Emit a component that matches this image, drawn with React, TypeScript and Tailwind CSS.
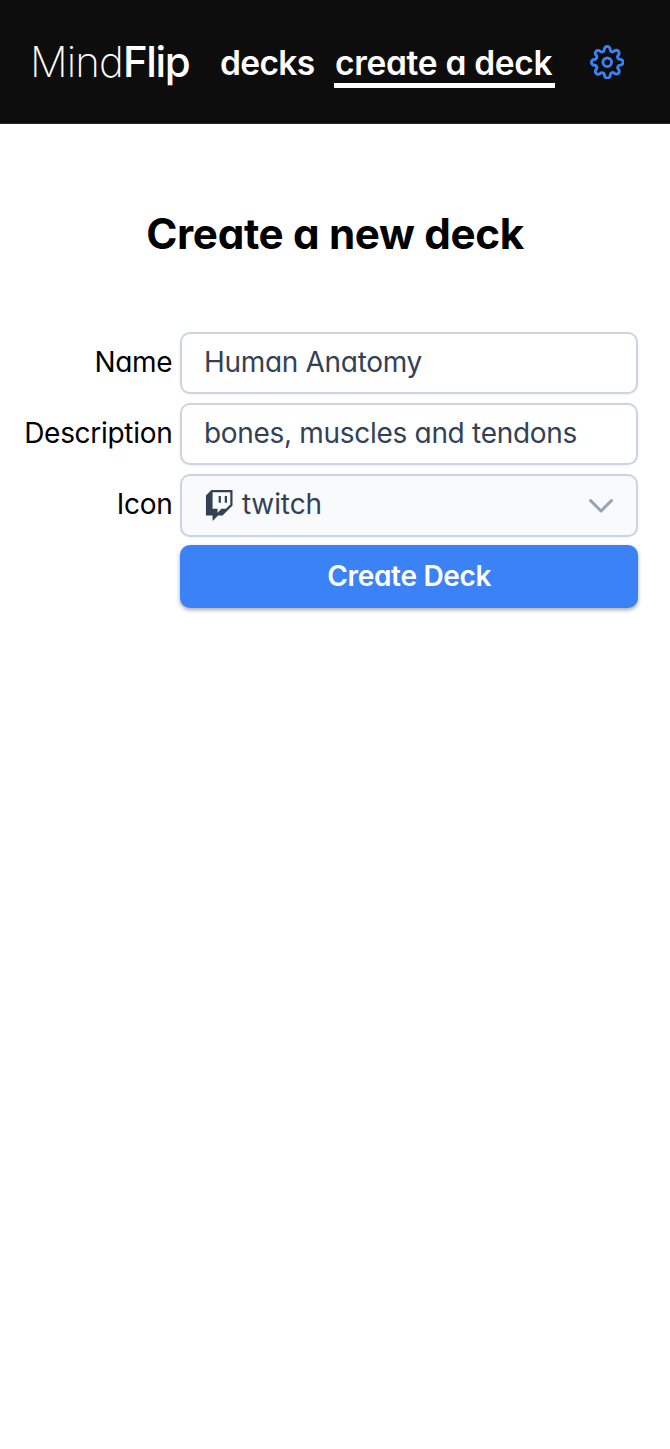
import { useState } from "react";
import { FiSettings } from "react-icons/fi";
import { BsTwitch } from "react-icons/bs";

const fieldClass =
  "w-full rounded-[10px] border-2 border-[#cbd5e1] px-[21.5px] text-[#334155] shadow-[0_1px_3px_rgba(0,0,0,0.06)] outline-none";

export default function App() {
  const [name, setName] = useState("Human Anatomy");
  const [description, setDescription] = useState("bones, muscles and tendons");

  return (
    <div className="min-h-[1449px] bg-white font-['Inter',sans-serif] text-[28px] leading-[43px] tracking-[-0.3px] text-black antialiased [font-feature-settings:'cv11']">
      <header className="flex h-[124px] items-center border-b border-[#2a2628] bg-[#0d0d0d] pl-[30px] text-white">
        <h1 className="w-[190px] whitespace-nowrap pt-[1px] text-[42px] font-extralight leading-[64px] tracking-[-0.9px]">
          Mind<span className="font-medium tracking-[-1.4px]">Flip</span>
        </h1>
        <nav className="flex items-center text-[33.5px] font-semibold leading-[42px]">
          <a className="w-[113.5px] whitespace-nowrap pt-[2px] tracking-[-0.65px]">decks</a>
          <a className="mt-[6px] flex h-[48px] w-[221px] flex-col whitespace-nowrap">
            <span className="h-[42px] px-[1.5px] pt-[1px] tracking-[-0.3px]">create a deck</span>
            <span className="h-[5px] bg-white" />
          </a>
        </nav>
        <FiSettings className="ml-[35px] mt-[1px] size-[34.5px] text-[#3b82f6]" />
      </header>

      <main className="pt-[80px]">
        <h2 className="text-center text-[42.2px] font-bold leading-[60px] tracking-[-0.35px]">
          Create a new deck
        </h2>
        <form
          className="mt-[68px] grid grid-cols-[172.4px_457.6px] items-center gap-x-2 gap-y-[9px]"
          onSubmit={(e) => e.preventDefault()}
        >
          <label className="pb-[1px] text-right" htmlFor="name">Name</label>
          <input
            id="name"
            className={`${fieldClass} h-[62px] pb-[2px]`}
            value={name}
            onChange={(e) => setName(e.target.value)}
          />
          <label className="pb-[1px] text-right" htmlFor="description">Description</label>
          <input
            id="description"
            className={`${fieldClass} h-[62px] pb-[2px]`}
            value={description}
            onChange={(e) => setDescription(e.target.value)}
          />
          <label className="pb-[1px] text-right">Icon</label>
          <button type="button" className={`${fieldClass} flex h-[62.6px] items-center bg-[#f8fafc]`}>
            <BsTwitch className="size-[31px]" />
            <span className="ml-[7px] pb-[1px] tracking-[-0.1px]">twitch</span>
            <svg className="ml-auto h-[15px] w-[26px] text-[#94a3b8]" viewBox="0 0 26 15" fill="none" stroke="currentColor" strokeWidth="3" strokeLinecap="round" strokeLinejoin="round">
              <path d="m2.5 2.5 10.5 10.5L23.5 2.5" />
            </svg>
          </button>
          <button
            type="submit"
            className="col-start-2 -mt-[0.4px] h-[62.8px] rounded-[10px] bg-[#3b82f6] font-semibold text-white shadow-[0_2px_4px_rgba(0,0,0,0.35)]"
          >
            Create Deck
          </button>
        </form>
      </main>
    </div>
  );
}
